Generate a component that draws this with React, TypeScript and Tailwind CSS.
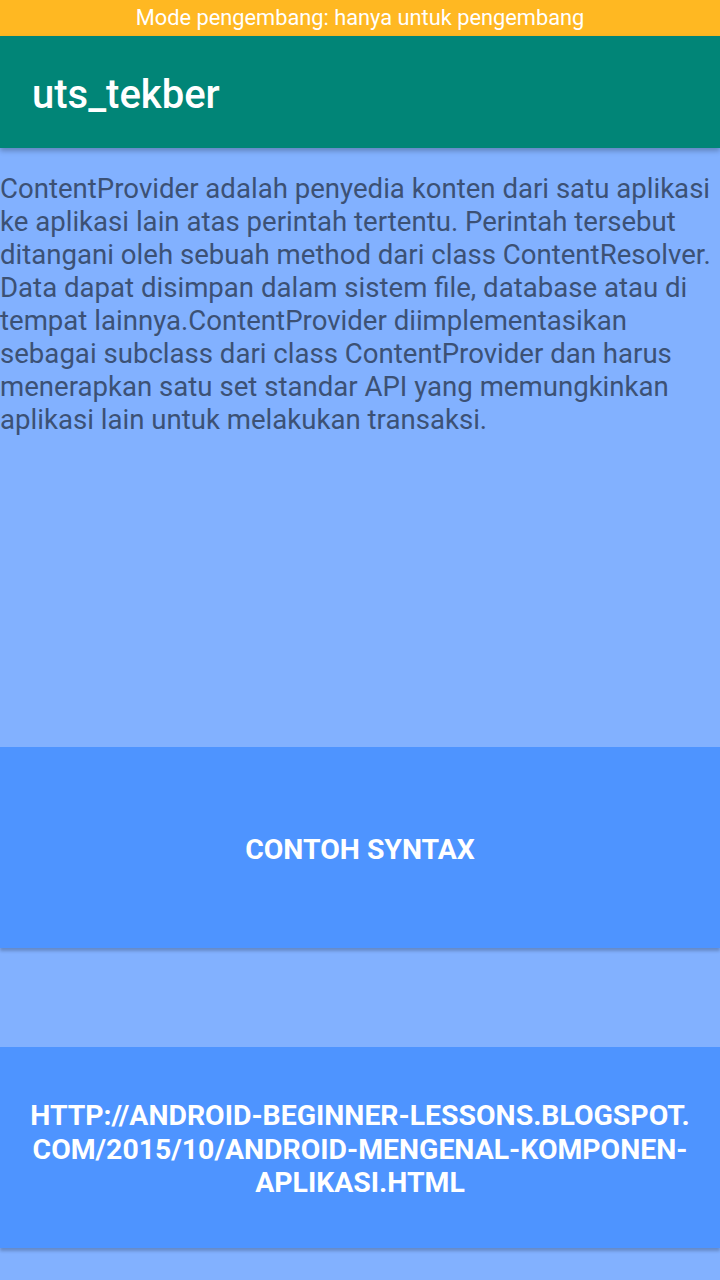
const paragraph = [
  "ContentProvider adalah penyedia konten dari satu aplikasi",
  "ke aplikasi lain atas perintah tertentu. Perintah tersebut",
  "ditangani oleh sebuah method dari class ContentResolver.",
  "Data dapat disimpan dalam sistem file, database atau di",
  "tempat lainnya.ContentProvider diimplementasikan",
  "sebagai subclass dari class ContentProvider dan harus",
  "menerapkan satu set standar API yang memungkinkan",
  "aplikasi lain untuk melakukan transaksi.",
];

const linkLines = [
  "http://android-beginner-lessons.blogspot.",
  "com/2015/10/android-mengenal-komponen-",
  "aplikasi.html",
];

export default function App() {
  return (
    <div className="flex min-h-[1280px] w-[720px] flex-col overflow-hidden bg-[#82b1ff] font-['Roboto',sans-serif]">
      <div className="flex h-[36px] items-center justify-center bg-[#ffb822] text-[21.8px] text-white">
        Mode pengembang: hanya untuk pengembang
      </div>
      <header className="relative z-10 flex h-[112px] items-center bg-[#018577] px-[32px] pt-[5px] shadow-[0_3px_5px_rgba(0,0,0,0.25)]">
        <h1 className="text-[40px] font-medium text-white">uts_tekber</h1>
      </header>
      <p className="whitespace-nowrap pt-[24px] text-[27.6px] leading-[33px] text-[#3c5175]">
        {paragraph.map((line) => (
          <span key={line} className="block">
            {line}
          </span>
        ))}
      </p>
      <div className="mt-auto flex flex-col gap-[99px] pb-[32px]">
        <button className="flex h-[201px] items-center justify-center bg-[#4e94ff] px-[24px] pt-[4px] text-[28.4px] font-bold uppercase leading-[33.5px] text-white shadow-[0_3px_3px_rgba(0,0,0,0.22)]">
          Contoh Syntax
        </button>
        <button className="flex h-[201px] flex-col items-center justify-center bg-[#4e94ff] px-[24px] pt-[4px] text-[28.4px] font-bold uppercase leading-[33.5px] text-white shadow-[0_3px_3px_rgba(0,0,0,0.22)]">
          {linkLines.map((line) => (
            <span key={line} className="block whitespace-nowrap">
              {line}
            </span>
          ))}
        </button>
      </div>
    </div>
  );
}
